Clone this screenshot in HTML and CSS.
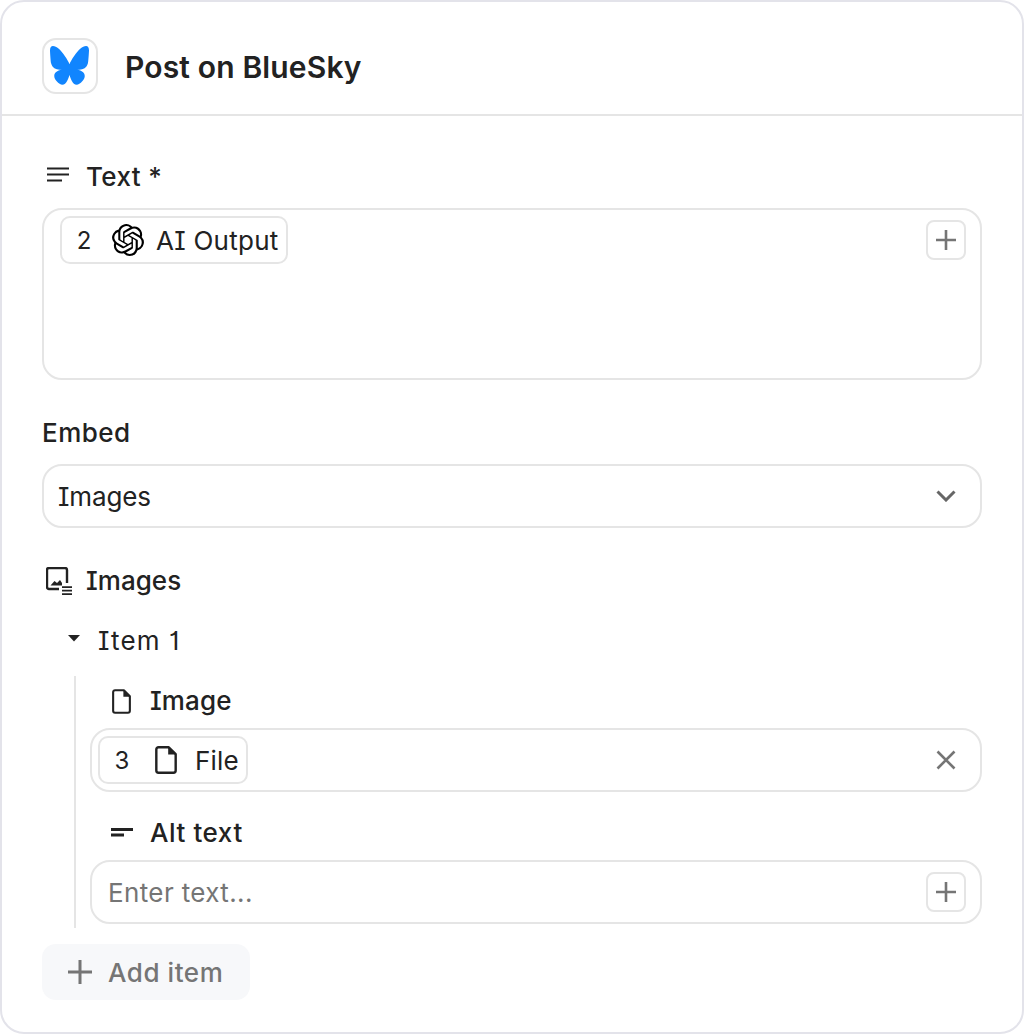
FILE: index.html
```html
<!DOCTYPE html>
<html lang="en">
<head>
<meta charset="utf-8">
<title>Post on BlueSky</title>
<link rel="stylesheet" href="styles.css">
</head>
<body>
<main class="card">
  <header class="header">
    <div class="logo">
      <svg class="logo-svg" viewBox="0 0 64 57" preserveAspectRatio="none"><path fill="#1185fe" d="M13.873 3.805C21.21 9.332 29.103 20.537 32 26.55v15.882c0-.338-.13.044-.41.867-1.512 4.456-7.418 21.847-20.923 7.944-7.111-7.32-3.819-14.64 9.125-16.85-7.405 1.264-15.73-.825-18.014-9.015C1.12 23.022 0 8.51 0 6.55 0-3.268 8.579-.182 13.873 3.805ZM50.127 3.805C42.79 9.332 34.897 20.537 32 26.55v15.882c0-.338.13.044.41.867 1.512 4.456 7.418 21.847 20.923 7.944 7.111-7.32 3.819-14.64-9.125-16.85 7.405 1.264 15.73-.825 18.014-9.015C62.88 23.022 64 8.51 64 6.55c0-9.818-8.578-6.732-13.873-2.745Z"/></svg>
    </div>
    <h1 class="title">Post on BlueSky</h1>
  </header>
  <section class="body">
    <div class="label label-text">
      <svg class="icon-lines" viewBox="0 0 22 16"><path d="M0 1.500h22M0 7.500h22M0 13.500h15" stroke="#222" stroke-width="2.200" fill="none"/></svg>
      <span>Text *</span>
    </div>
    <div class="field field-tall">
      <div class="chip chip-ai">
        <span class="chip-num">2</span>
        <svg class="chip-icon-ai" viewBox="0 0 24 24"><path fill="#000" d="M22.2819 9.8211a5.9847 5.9847 0 0 0-.5157-4.9108 6.0462 6.0462 0 0 0-6.5098-2.9A6.0651 6.0651 0 0 0 4.9807 4.1818a5.9847 5.9847 0 0 0-3.9977 2.9 6.0462 6.0462 0 0 0 .7427 7.0966 5.98 5.98 0 0 0 .511 4.9107 6.051 6.051 0 0 0 6.5146 2.9001A5.9847 5.9847 0 0 0 13.2599 24a6.0557 6.0557 0 0 0 5.7718-4.2058 5.9894 5.9894 0 0 0 3.9977-2.9001 6.0557 6.0557 0 0 0-.7475-7.0729zm-9.022 12.6081a4.4755 4.4755 0 0 1-2.8764-1.0408l.1419-.0804 4.7783-2.7582a.7948.7948 0 0 0 .3927-.6813v-6.7369l2.02 1.1686a.071.071 0 0 1 .038.052v5.5826a4.504 4.504 0 0 1-4.4945 4.4944zm-9.6607-4.1254a4.4708 4.4708 0 0 1-.5346-3.0137l.142.0852 4.783 2.7582a.7712.7712 0 0 0 .7806 0l5.8428-3.3685v2.3324a.0804.0804 0 0 1-.0332.0615L9.74 19.9502a4.4992 4.4992 0 0 1-6.1408-1.6464zM2.3408 7.8956a4.485 4.485 0 0 1 2.3655-1.9728V11.6a.7664.7664 0 0 0 .3879.6765l5.8144 3.3543-2.0201 1.1685a.0757.0757 0 0 1-.071 0l-4.8303-2.7865A4.504 4.504 0 0 1 2.3408 7.872zm16.5963 3.8558L13.1038 8.364 15.1192 7.2a.0757.0757 0 0 1 .071 0l4.8303 2.7913a4.4944 4.4944 0 0 1-.6765 8.1042v-5.6772a.79.79 0 0 0-.407-.667zm2.0107-3.0231l-.142-.0852-4.7735-2.7818a.7759.7759 0 0 0-.7854 0L9.409 9.2297V6.8974a.0662.0662 0 0 1 .0284-.0615l4.8303-2.7866a4.4992 4.4992 0 0 1 6.6802 4.66zM8.3065 12.863l-2.02-1.1638a.0804.0804 0 0 1-.038-.0567V6.0742a4.4992 4.4992 0 0 1 7.3757-3.4537l-.142.0805L8.704 5.459a.7948.7948 0 0 0-.3927.6813zm1.0976-2.3654l2.602-1.4998 2.6069 1.4998v2.9994l-2.5974 1.4997-2.6067-1.4997Z"/></svg>
        <span class="txt-ai">AI Output</span>
      </div>
      <button class="plus-btn"><svg class="plus-svg" viewBox="0 0 20 20"><path d="M10 0v20M0 10h20" stroke="#757575" stroke-width="2.6" fill="none"/></svg></button>
    </div>
    <div class="label label-plain">Embed</div>
    <div class="field field-row">
      <span class="value">Images</span>
      <svg class="chevron" viewBox="0 0 20 12"><path d="M1.500 1.500L10 10l8.500-8.500" stroke="#666" stroke-width="3" fill="none"/></svg>
    </div>
    <div class="label label-images">
      <svg class="icon-images" viewBox="0 0 26 28"><path d="M13 22H3a2 2 0 0 1-2-2V3a2 2 0 0 1 2-2h16a2 2 0 0 1 2 2v13" stroke="#222" stroke-width="2.400" fill="none"/><path d="M4.500 18.500l4-4.500 2.500 2 3-3 2 3v2.500z" fill="#222"/><path d="M16 20.200h10M16 23.700h10M16 27.200h10" stroke="#222" stroke-width="1.700" fill="none"/></svg>
      <span>Images</span>
    </div>
    <div class="item-head">
      <svg class="caret" viewBox="0 0 12 7"><path d="M0 0h12L6 6.500z" fill="#222"/></svg>
      <span>Item 1</span>
    </div>
    <div class="item-body">
      <div class="label label-sub label-image">
        <svg class="icon-file" viewBox="0 0 20 26"><path d="M12.500 1.200H3.200a2 2 0 0 0-2 2v19.600a2 2 0 0 0 2 2h13.600a2 2 0 0 0 2-2V7.500z" stroke="#222" stroke-width="2.200" stroke-linejoin="round" fill="none"/><path d="M12 1.500v6.500h6.800z" fill="#222"/></svg>
        <span>Image</span>
      </div>
      <div class="field field-row field-chip">
        <div class="chip chip-file">
          <span class="chip-num">3</span>
          <svg class="chip-icon-file" viewBox="0 0 20 26" preserveAspectRatio="none"><path d="M12.500 1.200H3.200a2 2 0 0 0-2 2v19.600a2 2 0 0 0 2 2h13.600a2 2 0 0 0 2-2V7.500z" stroke="#222" stroke-width="2.200" stroke-linejoin="round" fill="none"/><path d="M12 1.500v6.500h6.800z" fill="#222"/></svg>
          <span class="txt-file">File</span>
        </div>
        <svg class="close" viewBox="0 0 20 20"><path d="M1.500 1.500l17 17M18.500 1.500l-17 17" stroke="#757575" stroke-width="2.600" fill="none"/></svg>
      </div>
      <div class="label label-sub label-alt">
        <svg class="icon-short" viewBox="0 0 22 10"><path d="M0 8h13M0 2.500h22" stroke="#222" stroke-width="2.800" fill="none"/></svg>
        <span>Alt text</span>
      </div>
      <div class="field field-row field-input">
        <span class="placeholder">Enter text...</span>
        <button class="plus-btn plus-inline"><svg class="plus-svg" viewBox="0 0 20 20"><path d="M10 0v20M0 10h20" stroke="#757575" stroke-width="2.6" fill="none"/></svg></button>
      </div>
    </div>
    <button class="add-item">
      <svg class="add-svg" viewBox="0 0 24 24"><path d="M12 0v24M0 12h24" stroke="#757575" stroke-width="3" fill="none"/></svg>
      <span>Add item</span>
    </button>
  </section>
</main>
</body>
</html>
```
FILE: styles.css
```css
* { box-sizing: border-box; }
html, body { margin: 0; padding: 0; background: #fff; }
body {
  width: 1024px;
  height: 1034px;
  font-family: Inter, Roboto, "Liberation Sans", sans-serif;
  font-feature-settings: "cv08" 1, "cv01" 1;
  color: #222;
}
svg { display: block; flex: none; }
button { font: inherit; padding: 0; background: none; }

.card {
  width: 1024px;
  height: 1034px;
  border: 2px solid #e3e3ea;
  border-radius: 24px;
  display: flex;
  flex-direction: column;
}
.header {
  height: 114px;
  padding: 36px 40px 20px;
  border-bottom: 2px solid #e5e5e5;
  display: flex;
  align-items: flex-start;
  gap: 27px;
}
.logo {
  width: 56px;
  height: 56px;
  padding: 0 2px 2px 0;
  border: 2px solid #e5e5e5;
  border-radius: 14px;
  display: flex;
  align-items: center;
  justify-content: center;
}
.logo-svg { width: 39px; height: 39px; }
.title {
  margin: 0;
  font-size: 30px;
  line-height: 56px;
  font-weight: 600;
  color: #222;
  padding-top: 1px;
  letter-spacing: 0.15px;
}
.body {
  padding: 0 40px;
  display: flex;
  flex-direction: column;
  align-items: stretch;
}
.label {
  display: flex;
  align-items: center;
  height: 36px;
  padding-top: 2px;
  font-size: 26px;
  line-height: 36px;
  font-weight: 500;
}
.label-text { margin-top: 42px; gap: 17px; padding-left: 5px; letter-spacing: 0.37px; }
.label-plain { margin-top: 34px; letter-spacing: 0.5px; }
.label-images { margin-top: 34px; gap: 14px; padding-left: 4px; letter-spacing: 0.03px; }
.icon-lines { width: 22px; height: 16px; margin-bottom: 4px; }
.icon-images { width: 26px; height: 28px; }

.field {
  border: 2px solid #e5e5e5;
  border-radius: 20px;
  background: #fff;
}
.label-text + .field { margin-top: 14px; }
.label-plain + .field { margin-top: 14px; }
.field-tall {
  height: 172px;
  padding: 6px 14px 6px 16px;
  display: flex;
  align-items: flex-start;
  justify-content: space-between;
}
.field-row {
  height: 64px;
  display: flex;
  align-items: center;
  justify-content: space-between;
  padding: 0 24px 0 14px;
}
.value { font-size: 26px; letter-spacing: -0.13px; }
.chevron { width: 20px; height: 12px; }
.chip {
  height: 48px;
  border: 2px solid #e5e5e5;
  border-radius: 10px;
  display: flex;
  align-items: center;
  font-size: 26px;
}
.chip-ai { width: 228px; padding-left: 13px; }
.chip-file { width: 150px; padding-left: 13px; }
.txt-ai { letter-spacing: 0.25px; }
.txt-file { letter-spacing: 0.2px; }
.chip-num { width: 18px; text-align: center; font-size: 24px; }
.chip-icon-ai { width: 32px; height: 32px; margin: 0 12px 0 19px; }
.chip-icon-file { width: 22px; height: 28px; margin: 0 18px 0 24px; }
.plus-btn {
  width: 40px;
  height: 40px;
  margin-top: 4px;
  border: 2px solid #e5e5e5;
  border-radius: 8px;
  display: flex;
  align-items: center;
  justify-content: center;
}
.plus-inline { margin: 0 -10px 0 0; }
.plus-svg { width: 20px; height: 20px; }

.item-head {
  display: flex;
  align-items: center;
  gap: 18px;
  margin-top: 24px;
  padding: 2px 0 0 26px;
  height: 36px;
  font-size: 26px;
  line-height: 36px;
  letter-spacing: 1.15px;
}
.caret { width: 12px; height: 7px; margin-top: -6px; }
.item-body {
  margin: 18px 0 0 32px;
  padding: 6px 0 4px 14px;
  border-left: 2px solid #e5e5e5;
  height: 252px;
}
.label-sub { gap: 18px; padding-left: 20px; }
.label-sub + .field { margin-top: 10px; }
.label-image { padding-left: 22px; gap: 19px; letter-spacing: 0.1px; }
.label-alt { margin-top: 22px; padding-left: 21px; gap: 17px; letter-spacing: 0.57px; }
.icon-file { width: 19px; height: 25px; }
.icon-short { width: 22px; height: 10px; margin-top: -2px; }
.field-chip { padding: 0 24px 0 6px; }
.close { width: 20px; height: 20px; }
.field-input { padding-left: 16px; }
.placeholder { color: #757575; font-size: 26px; letter-spacing: 0.37px; }

.add-item {
  margin-top: 16px;
  width: 208px;
  height: 56px;
  border: 0;
  border-radius: 14px;
  background: #f7f8fa;
  display: flex;
  align-items: center;
  gap: 16px;
  padding-left: 26px;
  color: #757575;
  font-size: 26px;
  font-weight: 500;
  letter-spacing: 0.57px;
}
.add-svg { width: 24px; height: 24px; }
```
